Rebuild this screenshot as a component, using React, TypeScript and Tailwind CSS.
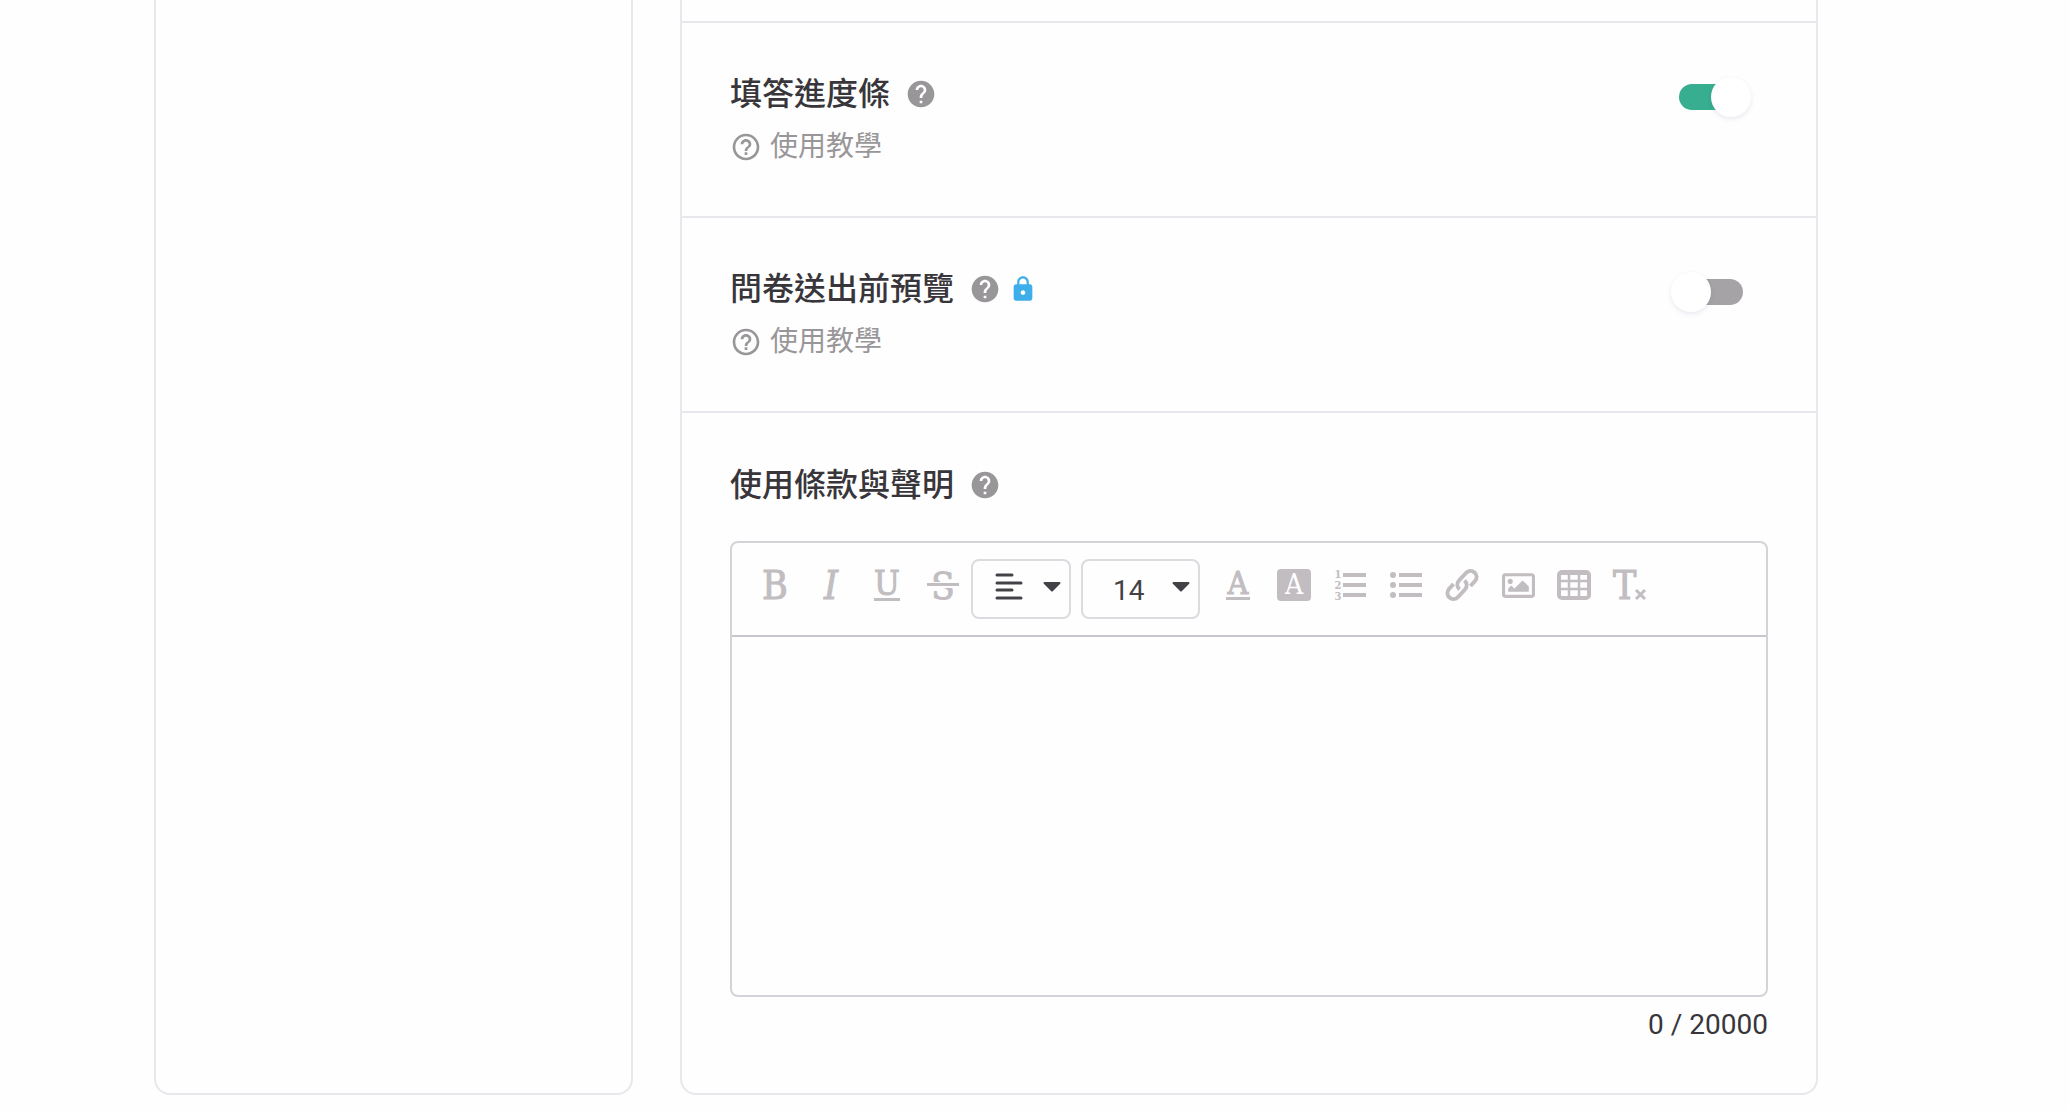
import React, { useState } from "react";
import { FaRegImage } from "react-icons/fa";
import { MdHelp, MdHelpOutline, MdLock } from "react-icons/md";

interface SettingRowProps {
  id: string;
  title: string;
  locked?: boolean;
  defaultOn?: boolean;
}

interface ToolButtonProps {
  label: string;
  children: React.ReactNode;
}

const MAX_LENGTH = 20000;
const FONT_SIZES = [12, 14, 16, 18, 24];

const HelpButton: React.FC = () => (
  <button type="button" aria-label="說明" className="ml-[15px] text-[#999699]">
    <MdHelp size={32} />
  </button>
);

const Caret: React.FC = () => (
  <svg width="18" height="10" viewBox="0 0 18 10" fill="#444246">
    <path d="M1.5 0h15a1 1 0 0 1 .7 1.7L10 9a1.4 1.4 0 0 1-2 0L.8 1.7A1 1 0 0 1 1.500 0z" />
  </svg>
);

const SettingRow: React.FC<SettingRowProps> = ({
  id,
  title,
  locked = false,
  defaultOn = false,
}) => {
  const [on, setOn] = useState(defaultOn);

  return (
    <section className="flex items-start justify-between border-t-2 border-[#e9e7ec] px-12 pt-[47px] pb-[45px]">
      <div>
        <div className="flex h-12 items-center">
          <label htmlFor={id} className="text-[32px] leading-[48px] font-medium">
            {title}
          </label>
          <HelpButton />
          {locked && <MdLock size={28} className="ml-2 text-[#3daee9]" />}
        </div>
        <a
          href="#tutorial"
          className="mt-[5px] flex h-12 items-center gap-2 text-[28px] leading-[48px] text-[#999699]"
        >
          <MdHelpOutline size={32} />
          使用教學
        </a>
      </div>
      <input
        id={id}
        type="checkbox"
        role="switch"
        checked={on}
        onChange={() => setOn(!on)}
        className="mt-[14px] mr-[25px] flex h-[26px] w-16 cursor-pointer appearance-none items-center rounded-full bg-[#a5a3a6] before:-ml-2 before:size-10 before:shrink-0 before:rounded-full before:bg-white before:shadow-[0_2px_5px_rgba(80,40,110,0.10)] before:content-[''] checked:bg-[#36ae8f] checked:before:ml-8"
      />
    </section>
  );
};

const ToolButton: React.FC<ToolButtonProps> = ({ label, children }) => (
  <button
    type="button"
    aria-label={label}
    className="flex h-[52px] w-14 items-center justify-center text-[#c1bdc1]"
  >
    {children}
  </button>
);

const Editor: React.FC = () => {
  const [text, setText] = useState("");
  const [size, setSize] = useState("14");

  return (
    <div>
      <div className="mt-8 rounded-lg border-2 border-[#d6d3d8]">
        {/* Toolbar */}
        <div className="flex flex-wrap items-start border-b-2 border-[#c9c7cb] px-[15px] py-4 font-['DejaVu_Serif_Condensed','DejaVu_Serif',serif] leading-none">
          <ToolButton label="粗體">
            <span className="text-[39px] [-webkit-text-stroke:1px]">B</span>
          </ToolButton>
          <ToolButton label="斜體">
            <span className="text-[39px] italic [-webkit-text-stroke:1px]">I</span>
          </ToolButton>
          <ToolButton label="底線">
            <span className="border-b-3 border-current text-[34px] leading-[29px] [-webkit-text-stroke:1px]">
              U
            </span>
          </ToolButton>
          <ToolButton label="刪除線">
            <svg width="34" height="48" viewBox="0 0 34 48" fill="currentColor">
              <text x="17" y="38" fontSize="38" textAnchor="middle" stroke="currentColor">
                S
              </text>
              <path d="M0 21h34v6H0z" fill="#fefefe" />
              <path d="M1 22h32v3H1z" />
            </svg>
          </ToolButton>
          <button
            type="button"
            aria-label="對齊"
            className="flex h-[60px] w-[100px] items-center justify-end gap-5 rounded-lg border-2 border-[#dddae0] pr-2 pb-1"
          >
            <svg width="28" height="28" viewBox="0 0 28 28" stroke="#444246" strokeWidth="3" strokeLinecap="round">
              <path d="M2 2h15M2 10h24M2 17h15M2 25h24" />
            </svg>
            <Caret />
          </button>
          <div className="ml-[10px] flex h-[60px] w-[119px] items-center rounded-lg border-2 border-[#dddae0] pr-2 pb-1">
            <select
              aria-label="字型大小"
              value={size}
              onChange={(e) => setSize(e.target.value)}
              className="h-[52px] min-w-0 flex-1 appearance-none pt-2 pl-[30px] font-[Roboto,sans-serif] text-[28px] text-[#444246]"
            >
              {FONT_SIZES.map((s) => (
                <option key={s}>{s}</option>
              ))}
            </select>
            <Caret />
          </div>
          <div className="ml-[10px] flex">
            <ToolButton label="文字顏色">
              <span className="border-b-3 border-current px-[2px] text-[32px] leading-[27px] [-webkit-text-stroke:1px]">
                A
              </span>
            </ToolButton>
            <ToolButton label="背景顏色">
              <span className="flex h-8 w-[34px] items-center justify-center rounded bg-current">
                <span className="text-[28px] leading-8 text-white">A</span>
              </span>
            </ToolButton>
            <ToolButton label="編號清單">
              <svg width="34" height="44" viewBox="0 -6 34 44" fill="currentColor">
                <g fontSize="11" fontWeight="bold" textAnchor="middle">
                  <text x="5" y="9">1</text>
                  <text x="5" y="20">2</text>
                  <text x="5" y="31">3</text>
                </g>
                <path d="M10 4h23v4H10zM10 14h23v4H10zM10 24h23v4H10z" />
              </svg>
            </ToolButton>
            <ToolButton label="項目清單">
              <svg width="34" height="32" viewBox="0 0 34 32" fill="currentColor">
                <circle cx="4" cy="6" r="3" />
                <circle cx="4" cy="16" r="3" />
                <circle cx="4" cy="26" r="3" />
                <path d="M10 4h23v4H10zM10 14h23v4H10zM10 24h23v4H10z" />
              </svg>
            </ToolButton>
            <ToolButton label="連結">
              <svg width="34" height="34" viewBox="0 0 34 34" fill="none" stroke="currentColor" strokeWidth="4">
                <path d="M14.500 21.500a6.500 6.500 0 0 1-.5-9l7-7.500a6 6 0 0 1 9 8l-4.500 5" />
                <path d="M19.500 12.500a6.500 6.500 0 0 1 .5 9l-7 7.500a6 6 0 0 1-9-8l4.500-5" />
              </svg>
            </ToolButton>
            <ToolButton label="圖片">
              <FaRegImage size={33} />
            </ToolButton>
            <ToolButton label="表格">
              <svg width="34" height="30" viewBox="0 0 34 30" fill="none" stroke="currentColor">
                <rect x="2" y="2" width="30" height="26" rx="3" strokeWidth="4" />
                <path d="M2 3h30" strokeWidth="4" />
                <path d="M2 11h30M2 19h30M12 3v25M22 3v25" strokeWidth="2.500" />
              </svg>
            </ToolButton>
            <ToolButton label="清除格式">
              <svg width="38" height="48" viewBox="-2 0 38 48" fill="currentColor">
                <text x="0" y="38" fontSize="39" stroke="currentColor">
                  T
                </text>
                <path d="M23 29l9 9M32 29l-9 9" stroke="currentColor" strokeWidth="3" />
              </svg>
            </ToolButton>
          </div>
        </div>

        <textarea
          id="terms"
          value={text}
          maxLength={MAX_LENGTH}
          onChange={(e) => setText(e.target.value)}
          className="block h-[358px] w-full resize-none p-6 text-[28px] outline-none"
        />
      </div>
      <p className="mt-2 text-right text-[28px] leading-10">
        {text.length} / {MAX_LENGTH}
      </p>
    </div>
  );
};

export default function App() {
  return (
    <div className="flex min-h-screen items-stretch gap-[47px] bg-[#fefefe] pr-[251px] pb-[17px] pl-[154px] font-[Roboto,'Noto_Sans_CJK_TC',sans-serif] text-[#38363b]">
      <aside className="w-[479px] shrink-0 rounded-b-2xl border-2 border-t-0 border-[#e9e7ec]" />
      <main className="min-w-0 flex-1 rounded-b-2xl border-2 border-t-0 border-[#e9e7ec] pt-[21px]">
        <SettingRow id="progress-bar" title="填答進度條" defaultOn />
        <SettingRow id="preview" title="問卷送出前預覽" locked />
        <section className="border-t-2 border-[#e9e7ec] px-12 pt-12 pb-12">
          <div className="flex h-12 items-center">
            <label htmlFor="terms" className="text-[32px] leading-[48px] font-medium">
              使用條款與聲明
            </label>
            <HelpButton />
          </div>
          <Editor />
        </section>
      </main>
    </div>
  );
}
